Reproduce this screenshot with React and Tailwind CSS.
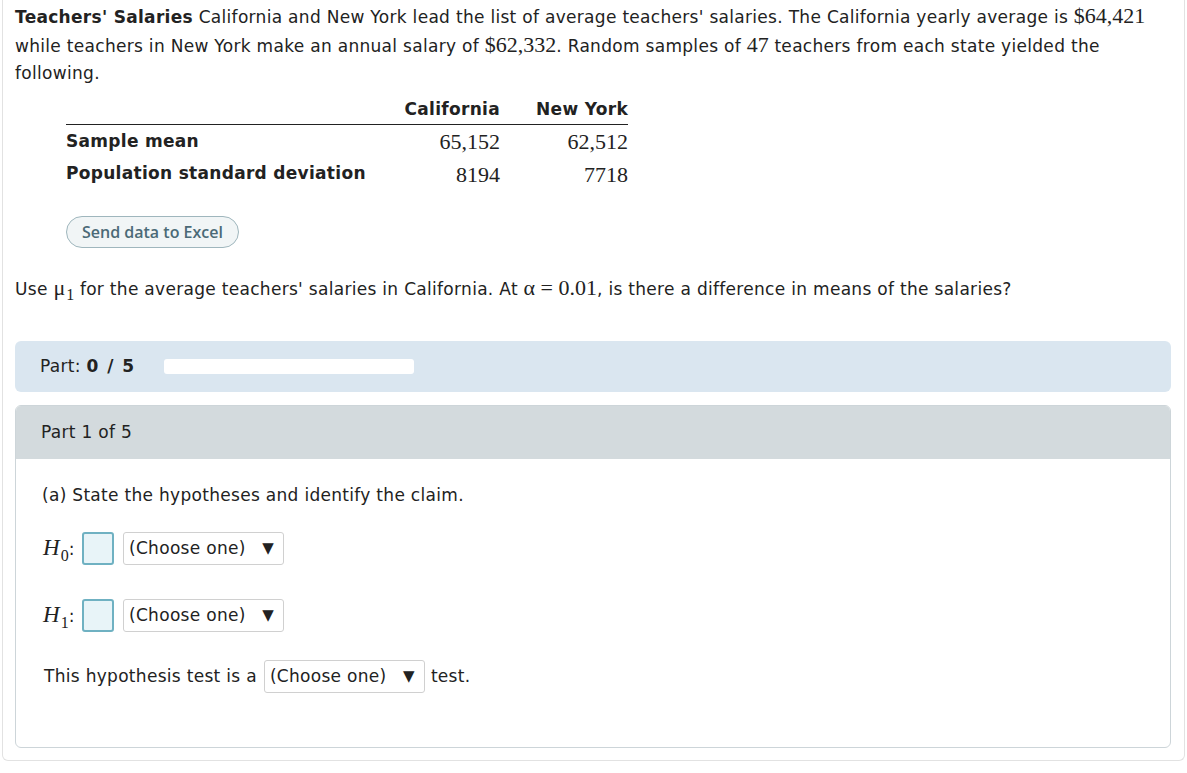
import React from "react";

const V = { fontFamily: '"DejaVu Sans", Verdana, sans-serif', letterSpacing: "0.3px" };
const S = { fontFamily: '"Liberation Serif", "Times New Roman", serif', letterSpacing: "0px" };

function Dropdown() {
  return (
    <span className="inline-flex items-center h-[33px] w-[161px] border border-[#d0d0d0] rounded-[3px] bg-white pl-[5px] pr-[9px] justify-between text-[17px] text-[#222]">
      <span>(Choose one)</span>
      <span className="text-[15px]">▼</span>
    </span>
  );
}

function Box() {
  return <span className="inline-block w-[32px] h-[33px] border-2 border-[#6fb1c2] bg-[#e8f4f8] rounded-[3px]" />;
}

function HLabel({ n }) {
  return (
    <span className="w-[40px] pl-[1px] flex items-baseline">
      <span style={S} className="text-[23px] italic">H</span>
      <span style={S} className="text-[16px] relative top-[6px] ml-[1px]">{n}</span>
      <span className="text-[17px]">:</span>
    </span>
  );
}

export default function App() {
  return (
    <div className="bg-white w-[1187px] h-[773px] overflow-hidden text-[#222]" style={V}>
      <div className="mx-[2px] border border-[#e2e2e2] border-t-0 rounded-b-[6px] h-[761px] pl-[12px] pr-[13px]">
        <p className="text-[17px] leading-[27px] pt-[2px] pr-[20px]">
          <b>Teachers' Salaries</b> California and New York lead the list of average teachers' salaries. The California yearly average is{" "}
          <span style={S} className="text-[22px]">$64,421</span> while teachers in New York make an annual salary of{" "}
          <span style={S} className="text-[22px]">$62,332</span>. Random samples of <span style={S} className="text-[22px]">47</span> teachers from each state yielded the following.
        </p>

        <div className="ml-[51px] mt-[14px] w-[562px]">
          <div className="flex items-end border-b border-[#222] h-[24px] pb-[2px] text-[17px] font-bold">
            <span className="flex-1" />
            <span className="w-[110px] text-right">California</span>
            <span className="w-[128px] text-right">New York</span>
          </div>
          <div className="flex items-center h-[33px] text-[17px]">
            <span className="flex-1 font-bold">Sample mean</span>
            <span style={S} className="w-[110px] text-right text-[22px]">65,152</span>
            <span style={S} className="w-[128px] text-right text-[22px]">62,512</span>
          </div>
          <div className="flex items-center h-[32px] text-[17px]">
            <span className="flex-1 font-bold">Population standard deviation</span>
            <span style={S} className="w-[110px] text-right text-[22px]">8194</span>
            <span style={S} className="w-[128px] text-right text-[22px]">7718</span>
          </div>
        </div>

        <div className="ml-[51px] mt-[26px]">
          <span
            className="inline-flex items-center h-[32px] px-[15px] rounded-full border border-[#9fb6bd] bg-[#f1f5f6] text-[#4b6a77] text-[16px] font-semibold"
            style={{ fontFamily: '"Open Sans", Lato, sans-serif', letterSpacing: "0px" }}
          >
            Send data to Excel
          </span>
        </div>

        <p className="text-[17px] mt-[26px] leading-[27px] flex items-baseline">
          <span>Use&nbsp;</span>
          <span style={S} className="text-[22px]">μ</span>
          <span style={S} className="text-[16px] relative top-[5px] ml-[1px]">1</span>
          <span>&nbsp;for the average teachers' salaries in California. At&nbsp;</span>
          <span style={S} className="text-[22px]">α = 0.01</span>
          <span>, is there a difference in means of the salaries?</span>
        </p>

        <div className="mt-[38px] h-[51px] rounded-[6px] bg-[#dae6f0] flex items-center pl-[25px] text-[17px]">
          <span>Part: <b className="tracking-[1.5px]">0 / 5</b></span>
          <span className="ml-[28px] w-[250px] h-[15px] bg-white rounded-[3px]" />
        </div>

        <div className="mt-[13px] rounded-[6px] border border-[#cdd5d9] overflow-hidden h-[343px]">
          <div className="h-[53px] bg-[#d3dadd] flex items-center pl-[25px] text-[17px]">Part 1 of 5</div>
          <div className="pl-[26px] text-[17px]">
            <p className="mt-[24px] leading-[24px]">(a) State the hypotheses and identify the claim.</p>
            <div className="flex items-center mt-[24px] h-[35px]">
              <HLabel n="0" />
              <Box />
              <span className="ml-[9px]"><Dropdown /></span>
            </div>
            <div className="flex items-center mt-[32px] h-[35px]">
              <HLabel n="1" />
              <Box />
              <span className="ml-[9px]"><Dropdown /></span>
            </div>
            <div className="flex items-center mt-[27px] h-[33px] pl-[2px]">
              <span>This hypothesis test is a</span>
              <span className="ml-[7px]"><Dropdown /></span>
              <span className="ml-[6px]">test.</span>
            </div>
          </div>
        </div>
      </div>
    </div>
  );
}
